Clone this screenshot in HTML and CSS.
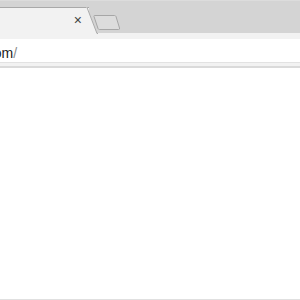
FILE: index.html
```html
<!DOCTYPE html>
<html lang="en">

<head>
  <meta charset="UTF-8" />
  <meta name="viewport" content="width=device-width, initial-scale=1.0" />
  <title>Browser window</title>
  <link rel="stylesheet" href="styles.css">
</head>

<body>
  <div class="window">
    <div class="tabstrip">
      <div class="tab">
        <span class="tab-close">&times;</span>
      </div>
      <svg class="tab-edge" width="12" height="27" viewBox="0 0 12 27">
        <path d="M0 0 L1 0 L11 26 L12 26 L12 27 L0 27 Z" fill="#f2f2f2" />
        <path d="M0.5 0.5 L1 0.5 L11 26.5 L12 26.5" fill="none" stroke="#a9a9a9" stroke-width="1" />
      </svg>
      <svg class="new-tab" width="28" height="17" viewBox="0 0 28 17">
        <path d="M1.5 1.5 L21.5 1.5 Q22.5 1.5 23 2.5 L26.5 14 Q27 15.5 25.5 15.5 L6.5 15.5 Q5.5 15.5 5 14.5 L1 2.5 Q0.8 1.5 1.5 1.5 Z"
          fill="#dcdcdc" stroke="#a6a6a6" stroke-width="1" />
      </svg>
    </div>
    <div class="toolbar">
      <div class="omnibox">
        <span class="url">example.c<span class="host-end">om</span><span class="path">/</span></span>
      </div>
    </div>
    <div class="content"></div>
  </div>
</body>

</html>
```

FILE: styles.css
```css
body {
  margin: 0;
  padding: 0;
  background: #fff;
  font-family: "Liberation Sans", Arial, sans-serif;
}

.window {
  width: 300px;
  height: 300px;
  display: flex;
  flex-direction: column;
  overflow: hidden;
}

.tabstrip {
  height: 32px;
  background: #d4d4d4;
  border-top: 1px solid #dcdcdc;
  border-bottom: 1px solid #bdbdbd;
  display: flex;
  align-items: flex-start;
  flex-shrink: 0;
}

.tab {
  width: 82px;
  height: 25px;
  margin-top: 6px;
  background: #f2f2f2;
  border-top: 1px solid #a9a9a9;
  display: flex;
  align-items: center;
  justify-content: flex-end;
  padding-right: 7px;
  box-sizing: content-box;
  position: relative;
  z-index: 1;
}

.tab-close {
  font-size: 14px;
  line-height: 1;
  color: #444;
  margin-top: -1px;
}

.tab-edge {
  display: block;
  margin-top: 6px;
  margin-left: -3px;
  position: relative;
  z-index: 1;
  height: 27px;
}

.new-tab {
  display: block;
  margin-top: 13px;
  margin-left: -5px;
}

.toolbar {
  background: #f2f2f2;
  padding-top: 6px;
  padding-bottom: 3px;
  border-bottom: 2px solid #dadada;
  flex-shrink: 0;
  margin-top: -1px;
}

.omnibox {
  height: 24px;
  background: #fff;
  border-bottom: 1px solid #e2e2e2;
  display: flex;
  align-items: center;
  padding-top: 4px;
  box-sizing: border-box;
  overflow: hidden;
}

.url {
  font-size: 14px;
  color: #222;
  white-space: nowrap;
  margin-left: -70px;
}

.path {
  color: #8a8a8a;
}

.content {
  flex: 1;
  background: #fff;
  border-bottom: 1px solid #e0e0e0;
}
```
